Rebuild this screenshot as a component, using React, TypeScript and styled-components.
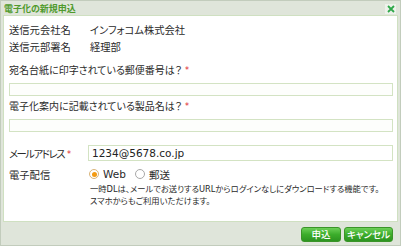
import { createGlobalStyle } from 'styled-components';
import styled from 'styled-components';

const GlobalStyle = createGlobalStyle`
  html, body {
    margin: 0;
    padding: 0;
    background: #ffffff;
  }
  body {
    font-family: "DejaVu Sans", "Noto Sans CJK JP", sans-serif;
    font-feature-settings: "palt";
    color: #2a2a2a;
  }
`;

const Dialog = styled.div`
  width: 401px;
  height: 246px;
  box-sizing: border-box;
  background: #dfe5da;
  border: 1px solid #c2ccbc;
  display: flex;
  flex-direction: column;
`;

const TitleBar = styled.div`
  height: 14px;
  display: flex;
  align-items: center;
  justify-content: space-between;
  padding: 0 4px 0 3px;
`;

const Title = styled.span`
  font-size: 9px;
  font-weight: bold;
  color: #4f9a2c;
`;

const CloseButton = styled.div`
  width: 11px;
  height: 10px;
  display: flex;
  align-items: center;
  justify-content: center;
  background: #eef2eb;
  margin-top: 1px;
`;

const Panel = styled.div`
  margin: 0 2px;
  height: 207px;
  box-sizing: border-box;
  background: #ffffff;
  border: 1px solid #cfe0c1;
  padding: 5px 4px 0 5px;
  display: flex;
  flex-direction: column;
`;

const InfoRow = styled.div`
  display: grid;
  grid-template-columns: 81px 1fr;
  height: 17px;
  align-items: center;
  font-size: 10.3px;
`;

const Question = styled.div<{ $top: number }>`
  margin-top: ${(p) => p.$top}px;
  height: 17px;
  line-height: 17px;
  font-size: 10px;
`;

const Required = styled.span`
  color: #e0262a;
  font-size: 8px;
  margin-left: 3px;
  vertical-align: 1px;
  letter-spacing: 0;
`;

const TextBox = styled.div<{ $h: number }>`
  margin-top: 4px;
  height: ${(p) => p.$h}px;
  box-sizing: border-box;
  border: 1px solid #d3e3c3;
  background: #fdfefc;
  display: flex;
  align-items: center;
  padding-left: 3px;
  font-size: 10px;
`;

const FieldRow = styled.div<{ $top: number }>`
  margin-top: ${(p) => p.$top}px;
  display: grid;
  grid-template-columns: 79px 1fr;
  align-items: center;
  height: 16px;
  font-size: 10.3px;
`;

const FieldLabel = styled.span<{ $tight?: boolean }>`
  letter-spacing: ${(p) => (p.$tight ? '-1.4px' : '0')};
`;

const EmailBox = styled.div`
  height: 16px;
  box-sizing: border-box;
  border: 1px solid #d3e3c3;
  display: flex;
  align-items: center;
  padding-left: 3px;
  font-size: 10.5px;
  color: #222222;
`;

const RadioGroup = styled.div`
  display: flex;
  align-items: center;
  padding-left: 1px;
  font-size: 10.5px;
`;

const Radio = styled.span<{ $checked?: boolean }>`
  width: 10px;
  height: 10px;
  box-sizing: border-box;
  border-radius: 50%;
  border: 1px solid ${(p) => (p.$checked ? '#d9b47a' : '#a8a8a8')};
  background: #ffffff;
  display: inline-flex;
  align-items: center;
  justify-content: center;
  margin-right: 4px;
  &::after {
    content: '';
    width: 5px;
    height: 5px;
    border-radius: 50%;
    background: ${(p) => (p.$checked ? '#f39a12' : 'transparent')};
  }
`;

const RadioLabel = styled.span`
  margin-right: 9px;
`;

const Note = styled.div`
  margin-top: 1px;
  margin-left: 81px;
  font-size: 8.3px;
  line-height: 12px;
`;

const Footer = styled.div`
  flex: 1;
  display: flex;
  justify-content: flex-end;
  align-items: flex-start;
  gap: 3px;
  padding: 5px 7px 0 0;
`;

const Button = styled.button<{ $w: number }>`
  width: ${(p) => p.$w}px;
  height: 15px;
  padding: 0;
  border: 1px solid #3a9428;
  border-radius: 3px;
  background: linear-gradient(180deg, #6ccf57 0%, #3cad2b 50%, #2c9420 100%);
  color: #ffffff;
  font-family: "Noto Sans CJK JP", sans-serif;
  font-feature-settings: "palt";
  font-size: 9.5px;
  font-weight: 500;
  line-height: 13px;
  cursor: pointer;
`;

const App = () => {
  return (
    <>
      <GlobalStyle />
      <Dialog>
        <TitleBar>
          <Title>電子化の新規申込</Title>
          <CloseButton>
            <svg width="8" height="8" viewBox="0 0 8 8">
              <path d="M1 1 L7 7 M7 1 L1 7" stroke="#2fa84a" strokeWidth="1.8" />
            </svg>
          </CloseButton>
        </TitleBar>
        <Panel>
          <InfoRow>
            <span>送信元会社名</span>
            <span>インフォコム株式会社</span>
          </InfoRow>
          <InfoRow>
            <span>送信元部署名</span>
            <span>経理部</span>
          </InfoRow>
          <Question $top={7}>
            宛名台紙に印字されている郵便番号は？<Required>*</Required>
          </Question>
          <TextBox $h={13} />
          <Question $top={2}>
            電子化案内に記載されている製品名は？<Required>*</Required>
          </Question>
          <TextBox $h={13} />
          <FieldRow $top={13}>
            <FieldLabel $tight>
              メールアドレス<Required>*</Required>
            </FieldLabel>
            <EmailBox>1234@5678.co.jp</EmailBox>
          </FieldRow>
          <FieldRow $top={5}>
            <FieldLabel>電子配信</FieldLabel>
            <RadioGroup>
              <Radio $checked />
              <RadioLabel>Web</RadioLabel>
              <Radio />
              <span>郵送</span>
            </RadioGroup>
          </FieldRow>
          <Note>
            一時DLは、メールでお送りするURLからログインなしにダウンロードする機能です。
            <br />
            スマホからもご利用いただけます。
          </Note>
        </Panel>
        <Footer>
          <Button $w={40}>申込</Button>
          <Button $w={49}>キャンセル</Button>
        </Footer>
      </Dialog>
    </>
  );
};

export default App;
